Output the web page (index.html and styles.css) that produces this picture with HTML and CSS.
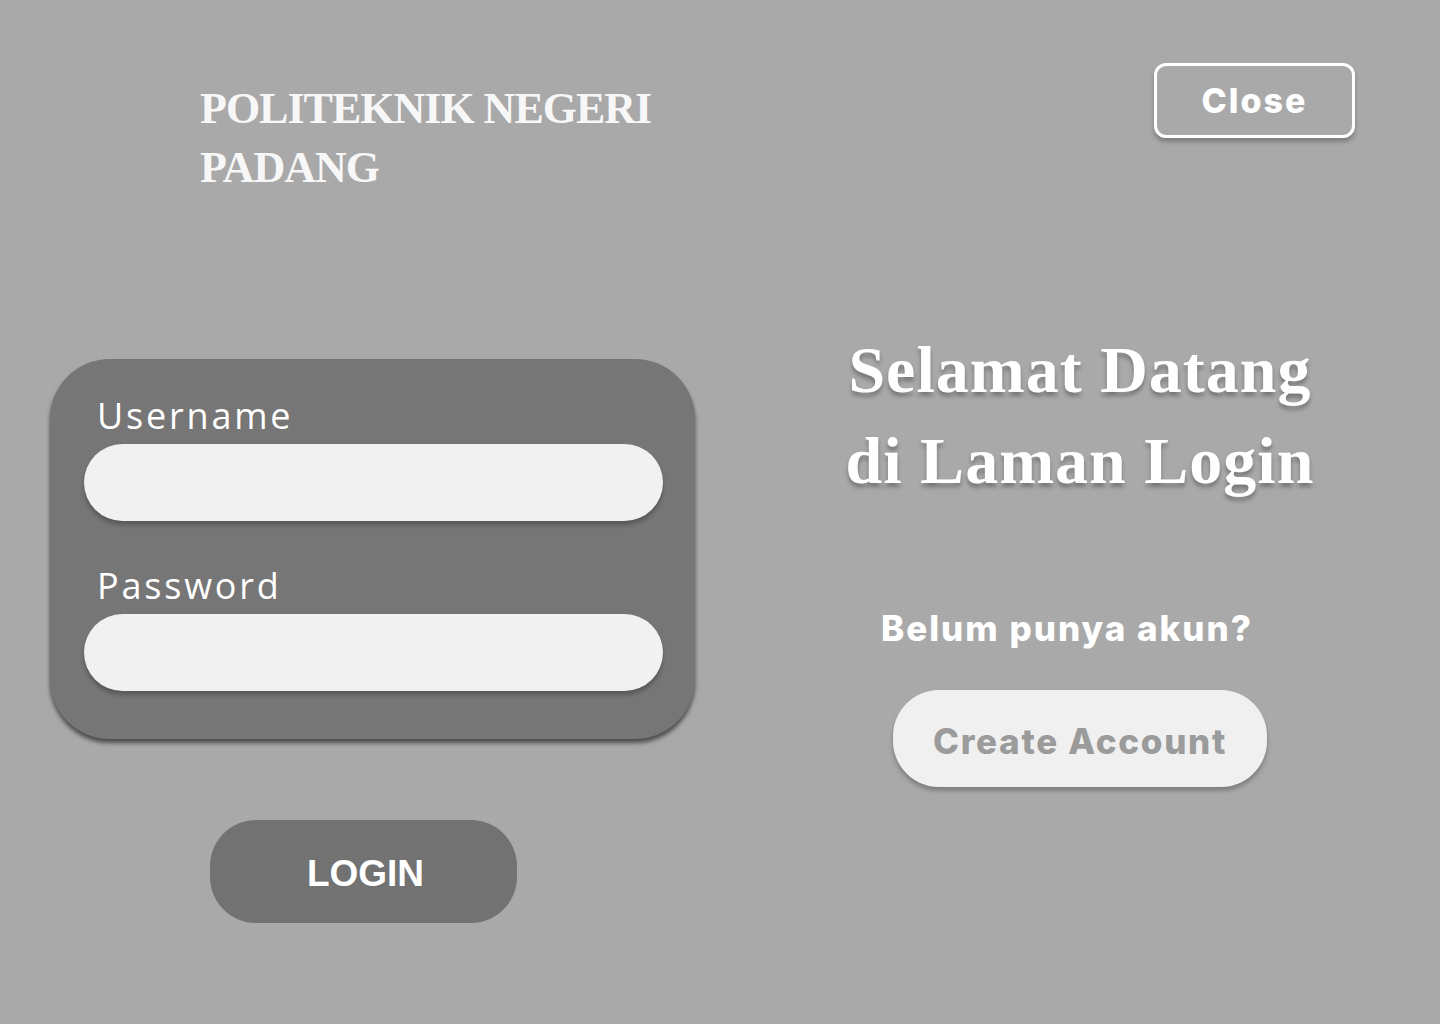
FILE: index.html
```html
<!DOCTYPE html>
<html lang="id">
<head>
<meta charset="utf-8">
<title>Login - Politeknik Negeri Padang</title>
<link rel="stylesheet" href="styles.css">
</head>
<body>
<div class="page">
  <section class="left">
    <h1 class="brand">POLITEKNIK NEGERI<br>PADANG</h1>
    <form class="card">
      <label class="label" for="username">Username</label>
      <input class="field" id="username" type="text">
      <label class="label label-pw" for="password">Password</label>
      <input class="field" id="password" type="password">
    </form>
    <button class="login-btn" type="button">LOGIN</button>
  </section>
  <section class="right">
    <button class="close-btn" type="button">Close</button>
    <h2 class="welcome">Selamat Datang<br>di Laman Login</h2>
    <p class="ask">Belum punya akun?</p>
    <button class="create-btn" type="button">Create Account</button>
  </section>
</div>
</body>
</html>
```

FILE: styles.css
```css
* { box-sizing: border-box; }
html, body { margin: 0; padding: 0; }
body {
  background: #a9a9a9;
  width: 1440px;
  height: 1024px;
  overflow: hidden;
  font-family: "Inter", "Liberation Sans", sans-serif;
}
.page {
  display: flex;
  height: 1024px;
}
.left {
  width: 720px;
  display: flex;
  flex-direction: column;
  align-items: flex-start;
  padding-left: 50px;
}
.brand {
  margin: 79px 0 0 150px;
  font-family: "Liberation Serif", serif;
  font-weight: 700;
  font-size: 44px;
  line-height: 59px;
  letter-spacing: -1px;
  color: #f7f7f7;
}
.card {
  margin: 162px 0 0 0;
  width: 645px;
  background: #767676;
  border-radius: 60px;
  padding: 37px 32px 48px 34px;
  display: flex;
  flex-direction: column;
  box-shadow: 0 4px 4px rgba(0, 0, 0, 0.55);
}
.label {
  font-family: "Open Sans", sans-serif;
  font-weight: 400;
  font-size: 36px;
  line-height: 40px;
  letter-spacing: 2.8px;
  color: #ffffff;
  margin: 0 0 8px 13px;
}
.label-pw { margin-top: 45px; }
.field {
  display: block;
  width: 579px;
  height: 77px;
  border: none;
  border-radius: 40px;
  background: #f1f1f1;
  box-shadow: 0 4px 4px rgba(0, 0, 0, 0.25);
  outline: none;
}
.login-btn {
  margin: 81px 0 0 160px;
  width: 307px;
  height: 103px;
  border: none;
  border-radius: 46px;
  background: #727272;
  color: #ffffff;
  font-family: "Liberation Sans", sans-serif;
  font-weight: 700;
  font-size: 37px;
  padding: 5px 0 0 4px;
}
.right {
  width: 720px;
  display: flex;
  flex-direction: column;
  align-items: center;
}
.close-btn {
  align-self: flex-end;
  margin: 63px 85px 0 0;
  width: 201px;
  height: 75px;
  border: 3px solid #ffffff;
  border-radius: 12px;
  background: transparent;
  color: #ffffff;
  font-family: "Inter", sans-serif;
  font-weight: 800;
  font-size: 34px;
  letter-spacing: 2px;
  box-shadow: 0 4px 4px rgba(0, 0, 0, 0.25);
  padding: 0;
}
.welcome {
  margin: 186px 0 0 0;
  font-family: "Liberation Serif", serif;
  font-weight: 700;
  font-size: 66px;
  line-height: 91px;
  letter-spacing: 1px;
  color: #ffffff;
  text-align: center;
  text-shadow: 0 4px 4px rgba(0, 0, 0, 0.3);
}
.ask {
  margin: 102px 0 0 -26px;
  font-family: "Inter", sans-serif;
  font-weight: 800;
  font-size: 35px;
  line-height: 40px;
  letter-spacing: 2px;
  color: #ffffff;
}
.create-btn {
  margin: 42px 0 0 0;
  width: 374px;
  height: 97px;
  border: none;
  border-radius: 46px;
  background: #f0f0f0;
  color: #9b9b9b;
  font-family: "Inter", sans-serif;
  font-weight: 800;
  font-size: 35px;
  letter-spacing: 1.7px;
  box-shadow: 0 4px 4px rgba(0, 0, 0, 0.25);
  padding: 4px 0 0 0;
}
```
